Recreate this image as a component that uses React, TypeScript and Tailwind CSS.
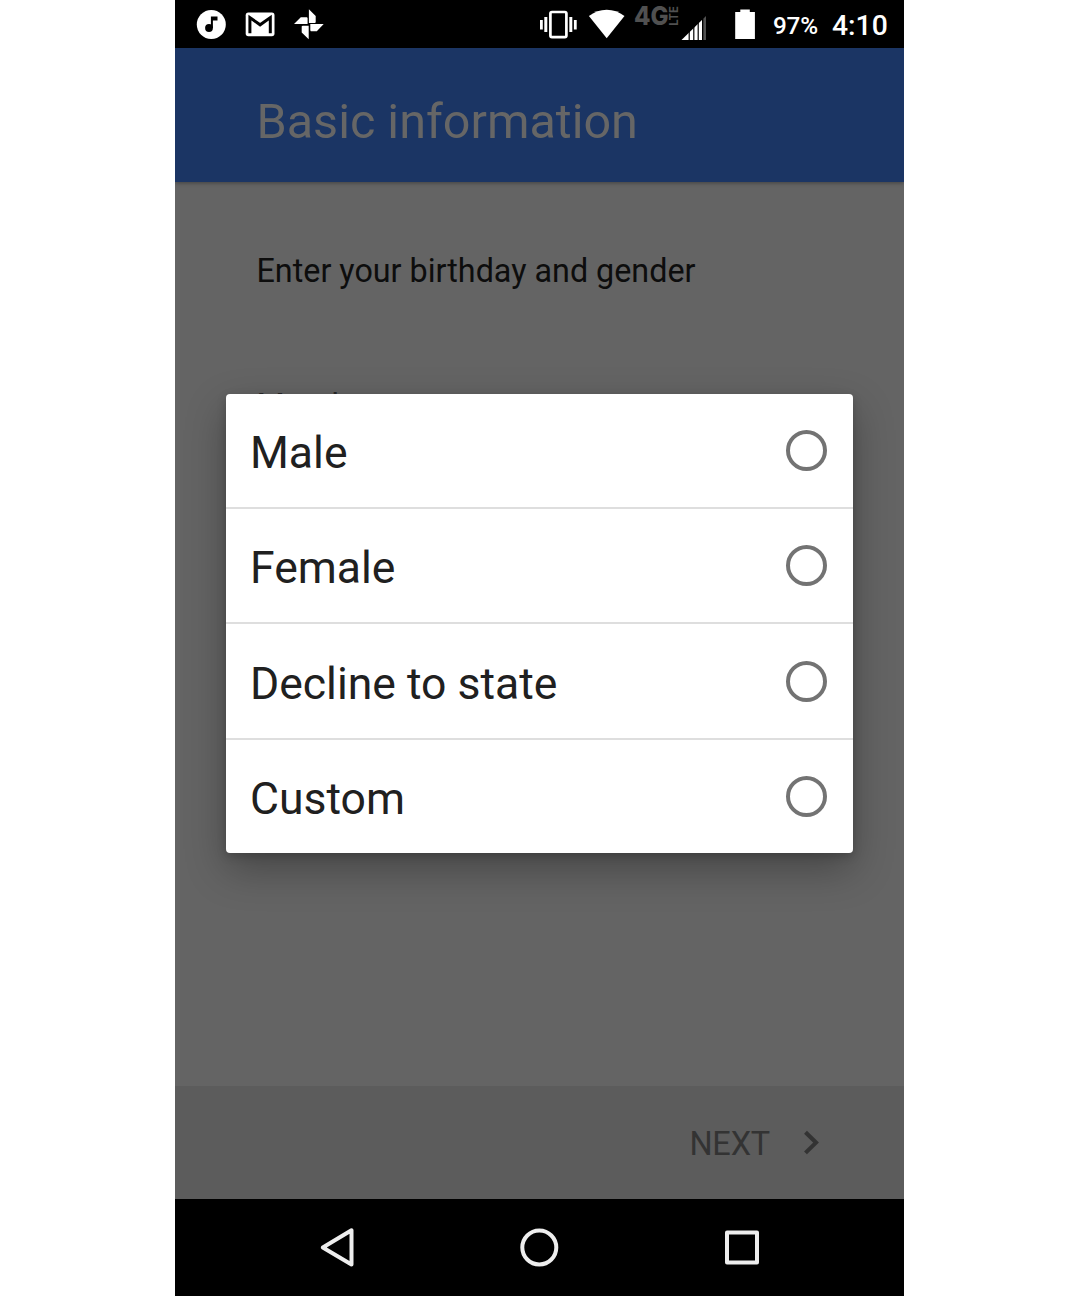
import React from "react";

const options = ["Male", "Female", "Decline to state", "Custom"];

function StatusBar() {
  return (
    <div className="z-10 flex h-[48px] items-center bg-black text-white">
      <svg className="ml-[21px] h-[30px] w-[30px]" viewBox="196 9 30 30">
        <circle cx="211.3" cy="24.5" r="14.5" fill="#fff" />
        <circle cx="209" cy="28" r="3.9" />
        <path d="M210.9 16.6h6.6v4h-4.6v7.4h-2z" />
      </svg>
      <svg className="ml-[19px] h-[30px] w-[30px]" viewBox="245 9 30 30">
        <rect x="245.7" y="12.6" width="28.8" height="23.6" rx="2.6" fill="#fff" />
        <path d="M249.9 33.2V17.6l10.2 7.2 10.2-7.2v15.6" fill="none" stroke="#000" strokeWidth="3" />
      </svg>
      <svg className="ml-[18px] h-[32px] w-[32px]" viewBox="293 8 32 32" fill="#fff">
        <path d="M308.9 9.3l6.8 6.8v6.4l-1 .5h-5.8zM323.7 24.1l-6.9 7.1h-6l-.5-1v-6.1zM308.7 39.3l-7-6.7v-6.3l1-.5h6zM294 24.1l6.8-6.8h6.3l.5 1v5.8z" />
      </svg>
      <svg className="ml-[214px] h-[32px] w-[40px]" viewBox="539 8 40 32">
        <rect x="550.4" y="12" width="16" height="25.2" rx="1.6" fill="none" stroke="#fff" strokeWidth="2.7" />
        <path d="M540 20h2.8v9.6H540zM544.3 17h3v15h-3zM569.3 17h3v15h-3zM573.9 20h2.8v9.6h-2.8z" fill="#fff" />
      </svg>
      <svg className="ml-[9px] h-[32px] w-[38px]" viewBox="588 8 38 32">
        <path d="M606.7 38.2L588.9 16.1C599 7.5 614.4 7.5 624.5 16.1z" fill="#fff" />
      </svg>
      <svg className="ml-[8px] h-[48px] w-[47px] overflow-visible" viewBox="634 0 47 48" fill="#505050" fontFamily="Inter">
        <text x="634" y="25.3" fontSize="25.5" fontWeight="800" textLength="34.5" lengthAdjust="spacingAndGlyphs">4G</text>
        <text transform="translate(678.3 25.8) rotate(-90)" fontSize="12" fontWeight="700" textLength="19.5" lengthAdjust="spacingAndGlyphs">LTE</text>
      </svg>
      <svg className="h-[48px] w-[28px]" viewBox="681 0 28 48">
        <path d="M681.5 40L702.2 19.8V40z" fill="#fff" />
        <path d="M703.2 18.8l2.8-2.8V40h-2.8z" fill="#505050" />
        <path d="M689.2 30v10M693.8 25v15M698.2 21v19M702.6 17v23" stroke="#000" strokeWidth="1.2" />
      </svg>
      <svg className="ml-[25px] h-[32px] w-[22px]" viewBox="734 8 22 32">
        <path d="M740.3 9.5h9.5v2.4h5.1v27h-19.7v-27h5.1z" fill="#fff" />
      </svg>
      <span className="ml-[17px] w-[59px] pt-[3px] text-[24.3px] font-medium leading-[45px] tracking-[-0.2px]">97%</span>
      <span className="pt-[3px] text-[28.3px] font-medium leading-[45px]">4:10</span>
    </div>
  );
}

export default function App() {
  return (
    <div className="flex h-[1296px] w-[1080px] overflow-hidden bg-white pl-[175px] font-['Roboto',sans-serif]">
      <div className="relative flex w-[729px] flex-col overflow-hidden">
        <StatusBar />
        <header className="z-[5] h-[134px] bg-[#1b3564] pl-[81.5px] pt-[44px] shadow-[0_1px_4px_rgba(0,0,0,0.35)]">
          <h1 className="text-[48.5px] leading-[59px] text-[#666]">Basic information</h1>
        </header>
        <main className="flex h-[904px] flex-col bg-[#646464] pl-[81.5px] pt-[69px] text-[32.3px] leading-[40px]">
          <p className="text-[#0d0d0d]">Enter your birthday and gender</p>
          <p className="mt-[95px] text-[#2a2a2a]">Month</p>
        </main>
        <footer className="flex h-[113px] items-center justify-end bg-[#5c5c5c] pr-[84px] text-[#333]">
          <span className="pt-[3px] text-[32.5px] leading-[40px] tracking-[-0.2px]">NEXT</span>
          <svg className="ml-[33px] h-[26px] w-[17px]" viewBox="0 0 17 26">
            <path d="M2.5 2.3L13 12.6 2.5 22.9" fill="none" stroke="#333" strokeWidth="4.1" />
          </svg>
        </footer>
        <nav className="h-[97px] bg-black">
          <svg className="h-[97px] w-[729px]" viewBox="175 1199 729 97" fill="none" stroke="#eee" strokeWidth="4" strokeLinejoin="round">
            <path d="M322.8 1247.5L351.5 1230.3V1264.5z" />
            <circle cx="539.3" cy="1247.5" r="17" />
            <rect x="727" y="1232.5" width="30" height="30" />
          </svg>
        </nav>
        <div role="dialog" className="absolute left-[51px] top-[393.6px] z-20 flex h-[459.4px] w-[627px] flex-col rounded-[4px] bg-white shadow-[0_16px_40px_rgba(0,0,0,0.3),0_3px_10px_rgba(0,0,0,0.18)]">
          {options.map((label) => (
            <label key={label} className="flex h-[115.4px] shrink-0 items-center justify-between border-b-2 border-[#dedede] pl-[24px] pr-[26px] last:h-[113.2px] last:border-0">
              <span className="pt-[5px] text-[44.5px] leading-[56px] text-[#202020]">{label}</span>
              <span className="h-[41px] w-[41px] rounded-full border-4 border-[#737373]" />
            </label>
          ))}
        </div>
      </div>
    </div>
  );
}
